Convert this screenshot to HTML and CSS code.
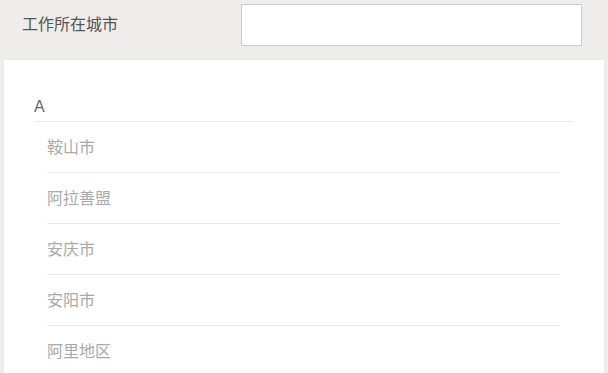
FILE: index.html
```html
<!DOCTYPE html>
<html lang="zh-CN">
<head>
    <meta charset="UTF-8">
    <meta name="viewport" content="width=device-width, initial-scale=1.0">
    <title>工作所在城市</title>
    <link rel="stylesheet" href="styles.css">
</head>
<body>
    <div class="field-row">
        <label class="field-label" for="city">工作所在城市</label>
        <input class="field-input" type="text" id="city" name="city">
    </div>

    <div class="city-panel">
        <div class="city-group">
            <div class="group-title">A</div>
            <ul class="city-list">
                <li>鞍山市</li>
                <li>阿拉善盟</li>
                <li>安庆市</li>
                <li>安阳市</li>
                <li>阿里地区</li>
            </ul>
        </div>
    </div>
</body>
</html>
```

FILE: styles.css
```css
* {
    margin: 0;
    padding: 0;
    box-sizing: border-box;
}

body {
    font-family: "Liberation Sans", "Noto Sans CJK SC", sans-serif;
    font-size: 16px;
    background: #eeedeb;
    color: #555;
    height: 100vh;
    overflow: hidden;
}

.field-row {
    display: flex;
    align-items: center;
    height: 60px;
    padding: 4px 26px 15px 22px;
}

.field-label {
    flex: 1;
    color: #555;
    line-height: 41px;
}

.field-input {
    width: 341px;
    height: 42px;
    border: 1px solid #cccccc;
    background: #fff;
    outline: none;
    font-family: inherit;
    font-size: 16px;
    padding: 0 10px;
}

.city-panel {
    margin: 0 4px;
    background: #fff;
    padding: 31px 30px 0 30px;
    min-height: 313px;
}

.group-title {
    line-height: 29px;
    padding-top: 1px;
    color: #666;
    border-bottom: 1px solid #ebebeb;
}

.city-list {
    list-style: none;
    padding: 0 14px 0 13px;
}

.city-list li {
    line-height: 49px;
    padding-top: 1px;
    color: #aaa;
    border-bottom: 1px solid #e8e8e8;
}
```
